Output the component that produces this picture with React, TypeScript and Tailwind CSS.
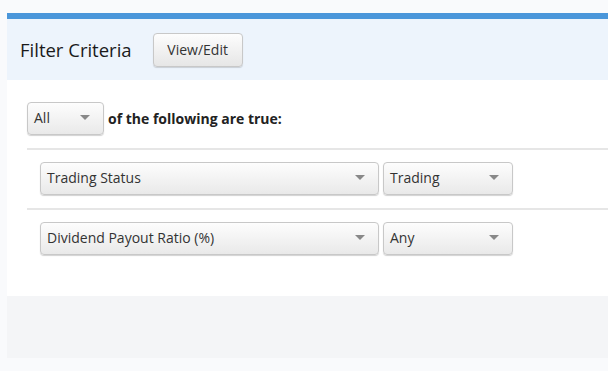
import React from "react";

const font = { fontFamily: '"Open Sans", "DejaVu Sans", sans-serif' };

function Caret() {
  return (
    <svg width="10" height="6" viewBox="0 0 10 6" className="shrink-0">
      <path d="M0 0 L10 0 L5 5 Z" fill="#888" />
    </svg>
  );
}

function Select({ label, width }: { label: string; width: string }) {
  return (
    <div
      className={`${width} h-[33px] flex items-center justify-between pl-[6px] pr-[13px] pb-[2px] rounded-[4px] border border-[#c8c8c8] bg-gradient-to-b from-[#fdfdfd] to-[#e9e9e9] shadow-[0_1px_1px_rgba(0,0,0,0.18)] text-[14px] text-[#333]`}
    >
      <span>{label}</span>
      <Caret />
    </div>
  );
}

function CriteriaRow({ field, value }: { field: string; value: string }) {
  return (
    <div className="border-t-2 border-[#e6e6e6] pt-[12px] pb-[13px] pl-[13px] flex gap-[4px]">
      <Select label={field} width="w-[339px]" />
      <Select label={value} width="w-[130px]" />
    </div>
  );
}

export default function App() {
  return (
    <div className="h-[371px] bg-[#f9fafc] pt-[13px] pl-[7px]" style={font}>
      <div className="border-t-[6px] border-[#4a96da]">
        <div className="h-[61px] bg-[#edf4fc] flex items-center pl-[13px] gap-[21px]">
          <h2 className="text-[18.5px] font-medium text-[#1a1a1a]">Filter Criteria</h2>
          <button className="w-[90px] h-[34px] rounded-[4px] border border-[#c8c8c8] bg-gradient-to-b from-[#fdfdfd] to-[#e6e6e6] shadow-[0_1px_1px_rgba(0,0,0,0.15)] text-[14px] text-[#333]">
            View/Edit
          </button>
        </div>
        <div className="h-[216px] bg-white pt-[22px] pl-[20px]">
          <div className="flex items-center gap-[4px] mb-[13px]">
            <Select label="All" width="w-[77px]" />
            <span className="text-[14px] font-bold text-[#222]">of the following are true:</span>
          </div>
          <CriteriaRow field="Trading Status" value="Trading" />
          <CriteriaRow field="Dividend Payout Ratio (%)" value="Any" />
        </div>
        <div className="h-[62px] bg-[#f4f5f7]" />
      </div>
    </div>
  );
}
